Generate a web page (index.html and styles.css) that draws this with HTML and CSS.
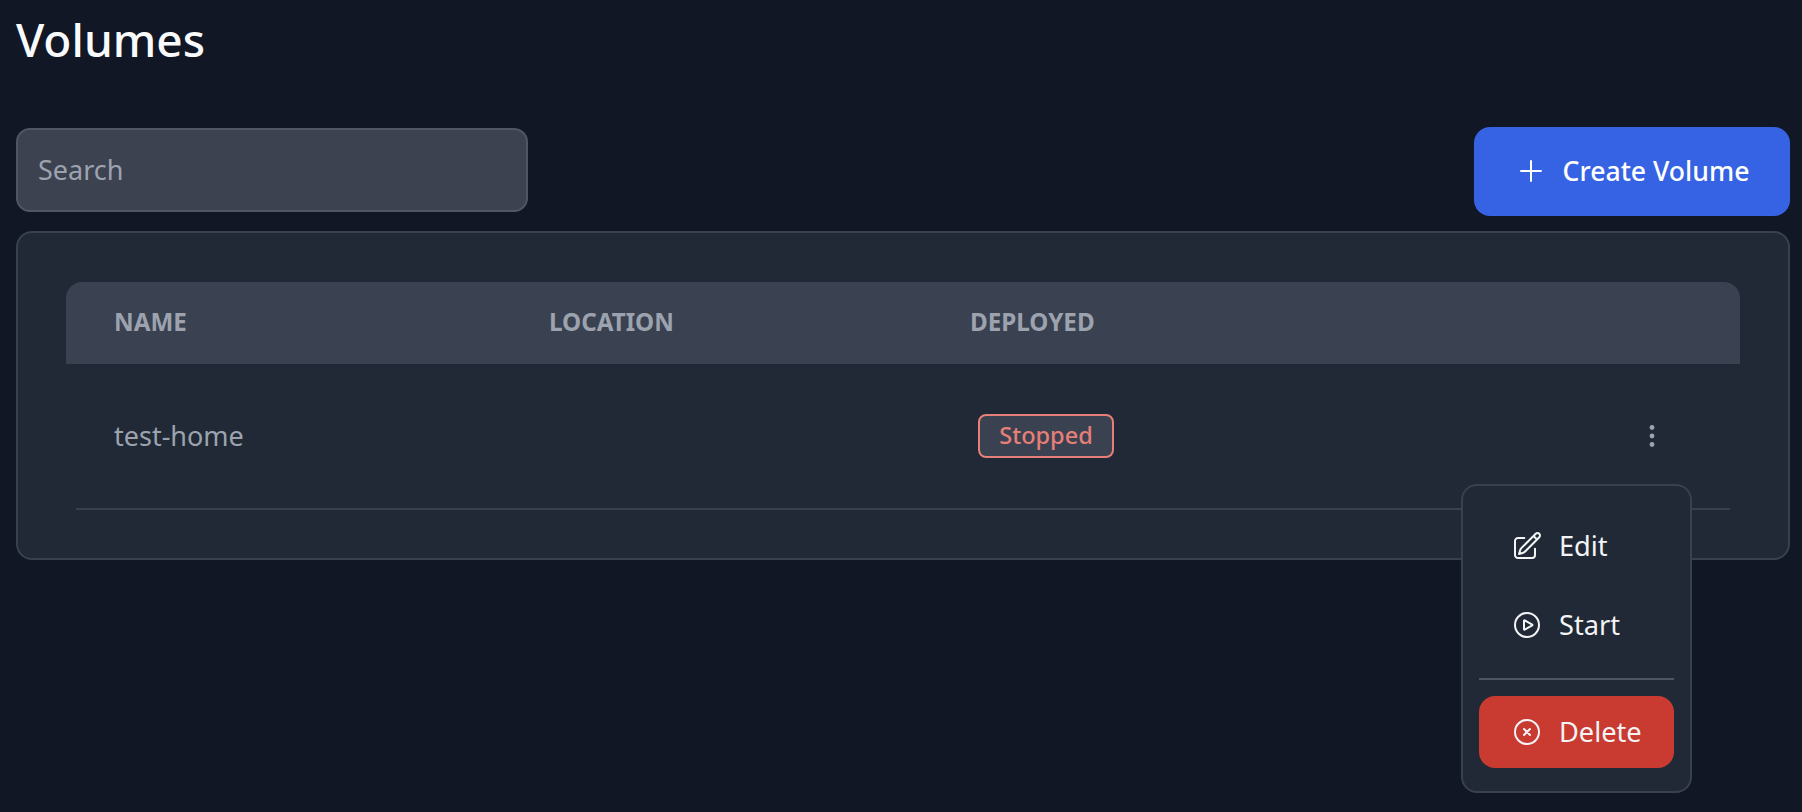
FILE: index.html
```html
<!DOCTYPE html>
<html lang="en">
<head>
<meta charset="utf-8">
<title>Volumes</title>
<link rel="stylesheet" href="styles.css">
</head>
<body>
<main class="page">
  <h1 class="title">Volumes</h1>
  <div class="toolbar">
    <input class="search" type="text" placeholder="Search">
    <button class="create" type="button">
      <svg class="icon-plus" viewBox="0 0 24 24" fill="none" stroke="currentColor" stroke-width="1.5" stroke-linecap="round" stroke-linejoin="round"><path d="M12 4.5v15m7.5-7.5h-15"/></svg>
      <span>Create Volume</span>
    </button>
  </div>
  <section class="card">
    <div class="thead">
      <div class="th">Name</div>
      <div class="th">Location</div>
      <div class="th">Deployed</div>
    </div>
    <div class="row">
      <div class="cell-name">test-home</div>
      <div></div>
      <div class="cell-status"><span class="badge">Stopped</span></div>
      <div class="cell-menu">
        <svg class="icon-dots" viewBox="0 0 24 24" fill="currentColor"><circle cx="12" cy="3.5" r="2.4"/><circle cx="12" cy="12" r="2.4"/><circle cx="12" cy="20.5" r="2.4"/></svg>
      </div>
    </div>
  </section>
  <nav class="menu">
    <a class="item">
      <svg class="icon" viewBox="0 0 24 24" fill="none" stroke="currentColor" stroke-width="1.5" stroke-linecap="round" stroke-linejoin="round"><path d="m16.862 4.487 1.687-1.688a1.875 1.875 0 1 1 2.652 2.652L10.582 16.07a4.5 4.5 0 0 1-1.897 1.13L6 18l.8-2.685a4.5 4.5 0 0 1 1.13-1.897l8.932-8.931Zm0 0L19.5 7.125M18 14v4.75A2.25 2.25 0 0 1 15.75 21H5.25A2.25 2.25 0 0 1 3 18.75V8.25A2.25 2.25 0 0 1 5.25 6H10"/></svg>
      <span>Edit</span>
    </a>
    <a class="item">
      <svg class="icon" viewBox="0 0 24 24" fill="none" stroke="currentColor" stroke-width="1.5" stroke-linecap="round" stroke-linejoin="round"><path d="M21 12a9 9 0 1 1-18 0 9 9 0 0 1 18 0Z"/><path d="M15.91 11.672a.375.375 0 0 1 0 .656l-5.603 3.113a.375.375 0 0 1-.557-.328V8.887c0-.286.307-.466.557-.327l5.603 3.112Z"/></svg>
      <span>Start</span>
    </a>
    <hr class="menu-rule">
    <a class="item item-danger">
      <svg class="icon" viewBox="0 0 24 24" fill="none" stroke="currentColor" stroke-width="1.5" stroke-linecap="round" stroke-linejoin="round"><path d="M21 12a9 9 0 1 1-18 0 9 9 0 0 1 18 0Z"/><path d="m9.75 9.75 4.5 4.5m0-4.5-4.5 4.5"/></svg>
      <span>Delete</span>
    </a>
  </nav>
</main>
</body>
</html>
```

FILE: styles.css
```css
* { box-sizing: border-box; }
html, body { margin: 0; height: 100%; }
body {
  background: #111725;
  color: #f3f4f6;
  font-family: "Noto Sans", "Open Sans", sans-serif;
  overflow: hidden;
}
.page {
  position: relative;
  height: 812px;
  padding: 11px 12px 0 16px;
}
.title {
  margin: 0;
  height: 64px;
  font-size: 46px;
  line-height: 56px;
  font-weight: 550;
  color: #f9fafb;
}
.toolbar {
  margin-top: 52px;
  height: 89px;
  display: flex;
  justify-content: space-between;
  align-items: flex-start;
}
.search {
  width: 512px;
  height: 84px;
  margin-top: 1px;
  padding: 0 20px 2px;
  background: #3c4250;
  border: 2px solid #4f5665;
  border-radius: 14px;
  font: 400 27px "Noto Sans", sans-serif;
  color: #f3f4f6;
  outline: none;
}
.search::placeholder { color: #9ca3af; opacity: 1; }
.create {
  width: 316px;
  height: 89px;
  display: flex;
  align-items: center;
  justify-content: center;
  gap: 16px;
  background: #3563e3;
  border: 0;
  border-radius: 16px;
  color: #fff;
  font: 500 26.6px "Noto Sans", sans-serif;
  padding: 0 0 2px;
}
.icon-plus { width: 32px; height: 32px; }
.card {
  margin-top: 15px;
  height: 329px;
  padding: 49px 48px;
  background: #202935;
  border: 2px solid #394150;
  border-radius: 16px;
}
.thead, .row {
  display: grid;
}
.thead {
  grid-template-columns: 435px 421px 1fr;
  height: 82px;
  align-items: center;
  background: #3a4150;
  border-radius: 16px 16px 0 0;
  padding-bottom: 4px;
}
.th {
  padding-left: 48px;
  font-size: 24.2px;
  font-weight: 700;
  text-transform: uppercase;
  color: #9ca3af;
}
.row {
  grid-template-columns: 425px 421px 1fr 156px;
  height: 146px;
  margin: 0 10px;
  align-items: center;
  border-bottom: 2px solid #394150;
}
.cell-name {
  padding: 0 0 2px 38px;
  font-size: 27px;
  color: #9ca3af;
}
.cell-status { padding-left: 56px; }
.badge {
  display: inline-block;
  width: 136px;
  height: 44px;
  line-height: 38px;
  text-align: center;
  background: #3a4150;
  border: 2px solid #e57f78;
  border-radius: 8px;
  color: #e57f78;
  font-size: 23.5px;
  font-weight: 500;
}
.cell-menu { display: flex; justify-content: center; }
.icon-dots { width: 24px; height: 28px; color: #9ca3af; }
.menu {
  position: absolute;
  left: 1461px;
  top: 484px;
  width: 231px;
  height: 309px;
  padding: 20px 16px 16px;
  background: #202935;
  border: 2px solid #394150;
  border-radius: 16px;
  display: flex;
  flex-direction: column;
}
.item {
  display: flex;
  align-items: center;
  gap: 16px;
  height: 79px;
  padding-left: 32px;
  color: #f3f4f6;
  font-size: 27.2px;
}
.item span { padding-bottom: 1px; }
.item-danger {
  flex: none;
  height: 72px;
  background: #c93a31;
  border-radius: 16px;
}
.icon { width: 32px; height: 32px; flex: none; }
.menu-rule {
  width: 100%;
  margin: 14px 0 16px;
  border: 0;
  border-top: 2px solid #4b5563;
}
```
